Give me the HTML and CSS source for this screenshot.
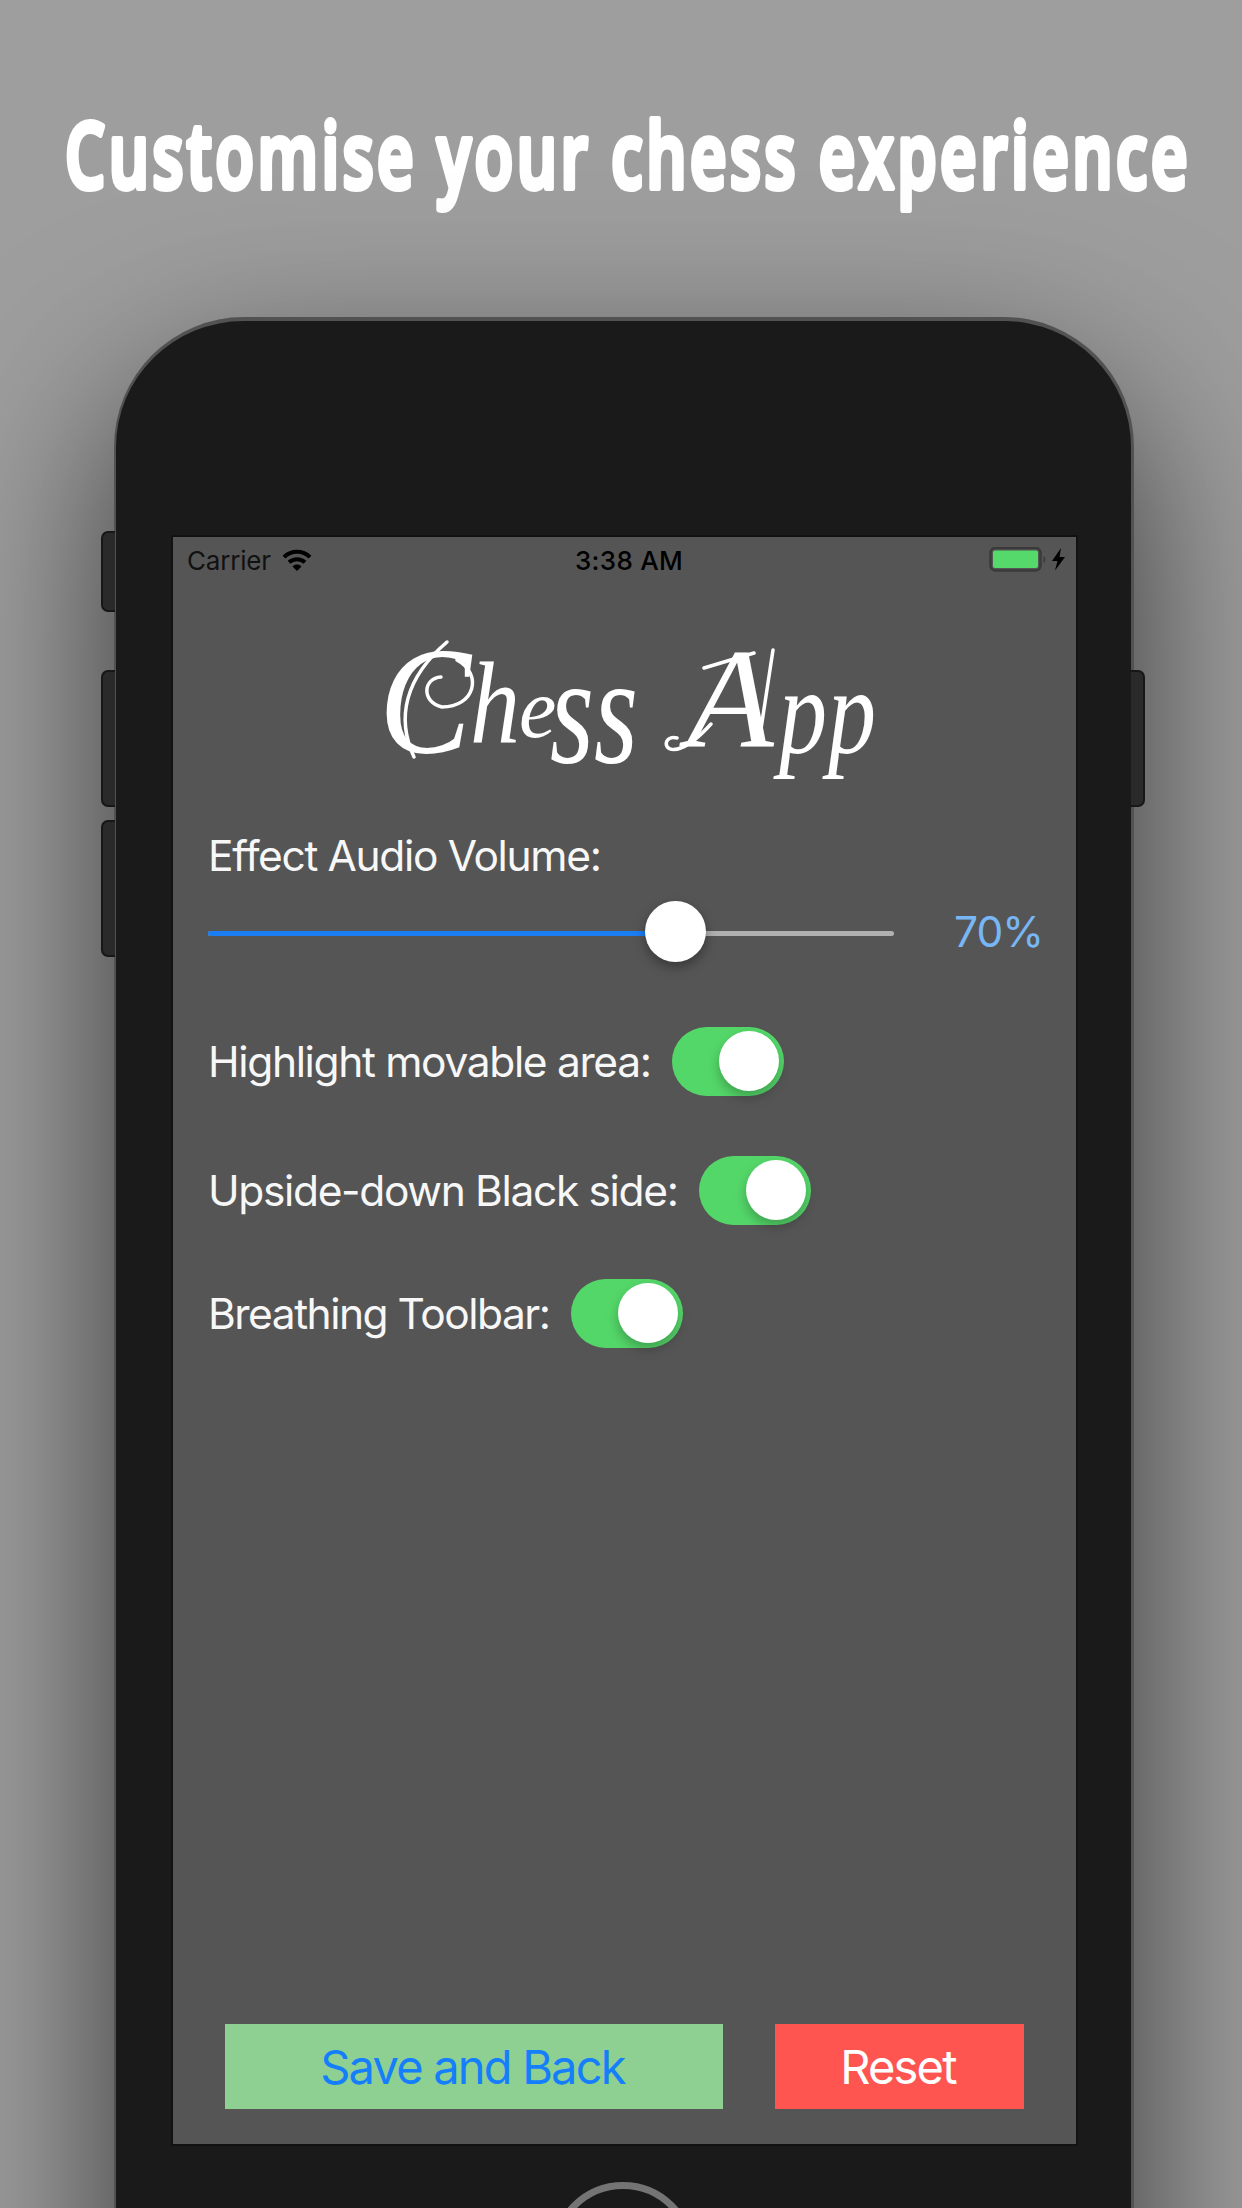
FILE: index.html
```html
<!DOCTYPE html>
<html lang="en">
<head>
<meta charset="utf-8">
<title>Chess App</title>
<link rel="stylesheet" href="styles.css">
</head>
<body>
<main class="page">
  <svg class="headline" width="1242" height="317" viewBox="0 0 1242 317">
    <text transform="translate(65 188) scale(.697 1)">Customise your chess experience</text>
  </svg>
  <div class="phone">
    <i class="key key-mute"></i>
    <i class="key key-up"></i>
    <i class="key key-down"></i>
    <i class="key key-power"></i>
    <section class="screen">
      <header class="status">
        <span class="carrier">Carrier</span>
        <svg class="wifi" width="30" height="22" viewBox="0 0 30 22">
          <path d="M2 8.2C9.200 1 20.800 1 28 8.200M7 13.300c4.500-4.100 11.500-4.100 16 0" fill="none" stroke="#000" stroke-width="4"/>
          <path d="M15 22l-4.500-4.600c2.600-2.400 6.400-2.400 9 0z"/>
        </svg>
        <span class="time">3:38 AM</span>
        <svg class="battery" width="77" height="26" viewBox="0 0 77 26">
          <rect x="1.500" y="1" width="50" height="22.500" rx="5" fill="none" stroke="#3a3a3a" stroke-width="2.500"/>
          <rect x="4" y="3.500" width="45" height="17.500" rx="2" fill="#55d96a"/>
          <path d="M54.500 9c2.400 1 2.400 6 0 7z" fill="#3a3a3a"/>
          <path d="M72 1l-9 13h5.500l-2.500 9.500L76 10h-5.500z"/>
        </svg>
      </header>
      <svg class="logo" width="903" height="220" viewBox="0 0 903 220">
        <text><tspan x="206" y="147" font-size="152" textLength="92" lengthAdjust="spacingAndGlyphs">C</tspan><tspan x="297" y="136" font-size="116" textLength="50" lengthAdjust="spacingAndGlyphs">h</tspan><tspan x="346" y="131" font-size="84">e</tspan><tspan x="377" y="156" font-size="156" textLength="44" lengthAdjust="spacingAndGlyphs">s</tspan><tspan x="421" y="156" font-size="156" textLength="44" lengthAdjust="spacingAndGlyphs">s</tspan> <tspan x="514" y="140" font-size="142">A</tspan><tspan x="606" y="147" font-size="122" textLength="48" lengthAdjust="spacingAndGlyphs">p</tspan><tspan x="655" y="147" font-size="122" textLength="48" lengthAdjust="spacingAndGlyphs">p</tspan></text>
        <path class="swash" d="M274 36C232 72 223 112 241 151"/>
        <path class="swash" d="M284 54C310 68 302 101 269 101C248 96 250 72 268 71"/>
        <path class="swash" d="M504 132C490 128 488 149 508 142C518 138 528 129 538 118M531 62L581 47M600 44L586 136"/>
      </svg>
      <div class="settings">
        <span class="label">Effect Audio Volume:</span>
        <div class="slider-row">
          <div class="slider"><i class="fill"></i><i class="thumb"></i></div>
          <span class="percent">70%</span>
        </div>
        <div class="row row-1"><span class="label">Highlight movable area:</span><i class="switch"></i></div>
        <div class="row row-2"><span class="label">Upside-down Black side:</span><i class="switch"></i></div>
        <div class="row row-3"><span class="label">Breathing Toolbar:</span><i class="switch"></i></div>
      </div>
      <footer class="actions">
        <button class="save">Save and Back</button>
        <button class="reset">Reset</button>
      </footer>
    </section>
    <i class="home"></i>
  </div>
</main>
</body>
</html>
```
FILE: styles.css
```css
* { box-sizing: border-box; }
body { margin: 0; background: #9e9e9e; font-family: Inter, "Liberation Sans", sans-serif; }
.page { width: 1242px; height: 2208px; overflow: hidden; }
.headline { display: block; overflow: visible; }
.headline text {
  font: 600 91px "Open Sans", sans-serif;
  letter-spacing: 5px;
  fill: #fff; stroke: #fff; stroke-width: 6; stroke-linejoin: round;
}
.phone {
  position: relative;
  width: 1020px; height: 2100px; margin-left: 114px; padding: 216px 56px 0 57px;
  background: #1a1a1a;
  border: solid #525252; border-width: 4px 3px 0 2px;
  border-radius: 130px 130px 0 0;
  box-shadow: 0 70px 180px rgba(0, 0, 0, .66);
}
.key {
  position: absolute; left: -15px; width: 14px; height: 137px;
  background: #2a2a2a; border: 2px solid #171717; border-right: 0; border-radius: 7px 0 0 7px;
}
.key-mute { top: 210px; height: 81px; }
.key-up { top: 349px; }
.key-down { top: 499px; }
.key-power { top: 349px; left: auto; right: -14px; border: 2px solid #171717; border-left: 0; border-radius: 0 7px 7px 0; }
.screen {
  display: flex; flex-direction: column;
  width: 903px; height: 1607px; background: #555; box-shadow: 0 0 0 2px #121212;
}
.status { display: flex; align-items: center; height: 46px; padding: 0 10px 0 14px; }
.carrier { font-size: 26px; letter-spacing: -.2px; width: 95px; white-space: nowrap; color: #111; }
.time { font-size: 26px; font-weight: 500; letter-spacing: .3px; width: 110px; margin-left: 263px; white-space: nowrap; }
.battery { margin-left: auto; }
.logo { display: block; margin-top: 23px; }
.logo text { font-family: "Liberation Serif", serif; font-style: italic; fill: #fff; }
.swash { fill: none; stroke: #fff; stroke-width: 3.500; stroke-linecap: round; }
.settings { padding: 0 36px 0 35px; color: #f7f7f7; font-size: 42.500px; display: flex; flex-direction: column; }
.label { line-height: 52px; margin-top: 4px; white-space: nowrap; letter-spacing: -1.350px; }
.slider-row { display: flex; align-items: center; justify-content: space-between; margin-top: 20px; height: 62px; }
.slider { position: relative; width: 686px; height: 5px; border-radius: 3px; background: #b0b0b0; }
.fill { display: block; width: 460px; height: 5px; border-radius: 3px; background: #1b7df2; }
.thumb {
  position: absolute; left: 437px; top: -30px; width: 61px; height: 61px;
  border-radius: 50%; background: #fff; box-shadow: 0 5px 12px rgba(0, 0, 0, .35);
}
.percent { color: #78b6f5; letter-spacing: -1px; margin: -3px -3px 0 0; }
.row { display: flex; align-items: center; height: 69px; gap: 21px; }
.row .label { margin-top: 0; }
.row-1 { margin-top: 63px; }
.row-2 { margin-top: 60px; }
.row-3 { margin-top: 54px; }
.row-3 .label { letter-spacing: -1.500px; }
.switch { width: 112px; height: 69px; border-radius: 35px; background: #54d769; display: flex; padding: 4px 5px 0 47px; }
.switch::before {
  content: ""; width: 60px; height: 60px; border-radius: 50%; background: #fff;
  box-shadow: 0 6px 12px rgba(0, 0, 0, .25);
}
.actions { display: flex; gap: 52px; margin: auto 52px 35px; height: 85px; }
.actions button { border: 0; padding: 0 3px 0 0; font: 400 47px Inter, sans-serif; letter-spacing: -1.800px; white-space: nowrap; }
.save { width: 498px; background: #8dd091; color: #157efb; }
.reset { width: 249px; background: #ff5550; color: #fff; }
.home {
  position: absolute; left: 435px; top: 1861px; width: 144px; height: 144px;
  border: 7px solid #747474; border-radius: 50%;
}
```
